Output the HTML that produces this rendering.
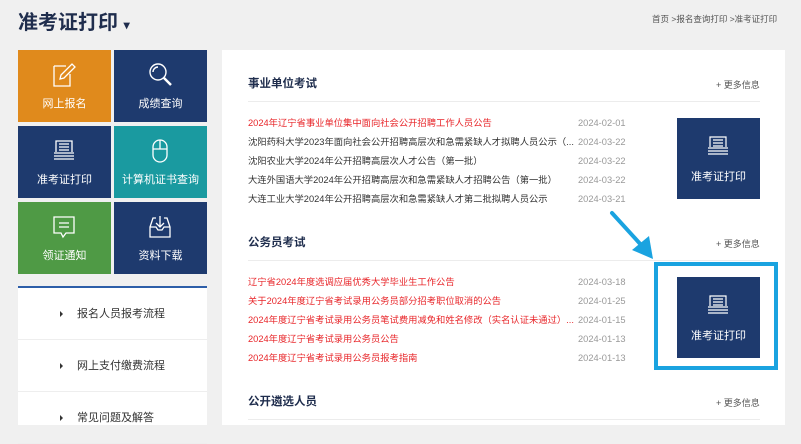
<!DOCTYPE html>
<html><head><meta charset="utf-8"><style>
*{margin:0;padding:0;box-sizing:border-box}
body{width:801px;height:425px;overflow:hidden;background:#f0f0f0;font-family:"Liberation Sans","Noto Sans CJK SC",sans-serif;position:relative}
.a{position:absolute}
.t{position:absolute;width:93px;height:72px;color:#fff;font-size:11px;text-align:center}
.t span{position:absolute;left:0;right:0;top:47px;line-height:14px}
.t svg{position:absolute;left:33px;top:11px}
.h{position:absolute;left:248px;font-size:11.5px;font-weight:bold;color:#1f2d4d;line-height:14px}
.m{position:absolute;left:716px;font-size:9px;color:#555;line-height:14px}
.ln{position:absolute;left:248px;width:512px;height:1px;background:#ececec}
.r{position:absolute;left:248px;font-size:9.3px;color:#333;white-space:nowrap;line-height:14px}
.r.red{color:#e8262a}
.d{position:absolute;left:578px;font-size:9.3px;color:#999;line-height:14px}
.bx{position:absolute;width:83px;height:81px;background:#1e3a6e;color:#fff;font-size:11px;text-align:center}
.bx span{position:absolute;left:0;right:0;top:52px;line-height:14px}
.bx svg{position:absolute;left:29px;top:17px}
.mi{position:absolute;left:18px;width:189px;height:52px;border-bottom:1px solid #eee;font-size:11px;color:#333}
.mi b{position:absolute;left:42px;top:23px;width:0;height:0;border-left:3px solid #333;border-top:3px solid transparent;border-bottom:3px solid transparent}
.mi span{position:absolute;left:59px;top:19px;line-height:14px}
</style></head><body>
<div class="a" style="left:18px;top:10px;font-size:20px;font-weight:bold;color:#1f2d4d;line-height:26px">准考证打印 <span style="font-size:12px">▾</span></div>
<div class="a" style="left:652px;top:13px;font-size:8.5px;color:#555;line-height:12px">首页 &gt;报名查询打印 &gt;准考证打印</div>

<div class="t" style="left:18px;top:50px;background:#e08a1c"><svg width="26" height="28" viewBox="0 0 26 28" fill="none" stroke="#fff" stroke-width="1.3"><path d="M3 5h12M3 5v20h16V13"/><path d="M9 18l1-4 11-11 3 3-11 11z"/></svg><span>网上报名</span></div>
<div class="t" style="left:114px;top:50px;background:#1e3a6e"><svg width="28" height="28" viewBox="0 0 28 28" fill="none" stroke="#fff" stroke-width="1.4"><circle cx="11" cy="11" r="8"/><path d="M6 11a5 5 0 0 1 5-5"/><path d="M17 17l7 7" stroke-width="2.5"/></svg><span>成绩查询</span></div>
<div class="t" style="left:18px;top:126px;background:#1e3a6e"><svg width="26" height="28" viewBox="0 0 26 28" fill="none" stroke="#fff" stroke-width="1.3"><path d="M5 15V4h16v11M8 7h10M8 10h10M8 13h10M3 16h20M3 19h20M3 22h20"/></svg><span>准考证打印</span></div>
<div class="t" style="left:114px;top:126px;background:#1a9aa0"><svg width="26" height="28" viewBox="0 0 26 28" fill="none" stroke="#fff" stroke-width="1.3"><rect x="6" y="3" width="14" height="22" rx="7"/><path d="M13 3v9M6 12h14"/></svg><span>计算机证书查询</span></div>
<div class="t" style="left:18px;top:202px;background:#4f9a45"><svg width="26" height="28" viewBox="0 0 26 28" fill="none" stroke="#fff" stroke-width="1.3"><path d="M3 4h20v16H15l-3 4-2-4H3z"/><path d="M8 10h10M8 14h10"/></svg><span>领证通知</span></div>
<div class="t" style="left:114px;top:202px;background:#1e3a6e"><svg width="26" height="28" viewBox="0 0 26 28" fill="none" stroke="#fff" stroke-width="1.3"><path d="M9 5H6L3 14v10h20V14L20 5h-3M3 14h6l2 3h4l2-3h6M13 3v11M9 10l4 4 4-4"/></svg><span>资料下载</span></div>

<div class="a" style="left:18px;top:286px;width:189px;height:139px;background:#fff;border-top:2px solid #2d5ea8"></div>
<div class="mi" style="top:288px"><b></b><span>报名人员报考流程</span></div>
<div class="mi" style="top:340px"><b></b><span>网上支付缴费流程</span></div>
<div class="mi" style="top:392px"><b></b><span>常见问题及解答</span></div>

<div class="a" style="left:222px;top:50px;width:563px;height:375px;background:#fff"></div>
<div class="h" style="top:77px">事业单位考试</div><div class="m" style="top:78px">+ 更多信息</div><div class="ln" style="top:101px"></div>
<div class="r red" style="top:116px">2024年辽宁省事业单位集中面向社会公开招聘工作人员公告</div><div class="d" style="top:116px">2024-02-01</div>
<div class="r" style="top:135px">沈阳药科大学2023年面向社会公开招聘高层次和急需紧缺人才拟聘人员公示（...</div><div class="d" style="top:135px">2024-03-22</div>
<div class="r" style="top:154px">沈阳农业大学2024年公开招聘高层次人才公告（第一批）</div><div class="d" style="top:154px">2024-03-22</div>
<div class="r" style="top:173px">大连外国语大学2024年公开招聘高层次和急需紧缺人才招聘公告（第一批）</div><div class="d" style="top:173px">2024-03-22</div>
<div class="r" style="top:192px">大连工业大学2024年公开招聘高层次和急需紧缺人才第二批拟聘人员公示</div><div class="d" style="top:192px">2024-03-21</div>

<div class="h" style="top:236px">公务员考试</div><div class="m" style="top:237px">+ 更多信息</div><div class="ln" style="top:260px"></div>
<div class="r red" style="top:275px">辽宁省2024年度选调应届优秀大学毕业生工作公告</div><div class="d" style="top:275px">2024-03-18</div>
<div class="r red" style="top:294px">关于2024年度辽宁省考试录用公务员部分招考职位取消的公告</div><div class="d" style="top:294px">2024-01-25</div>
<div class="r red" style="top:313px">2024年度辽宁省考试录用公务员笔试费用减免和姓名修改（实名认证未通过）...</div><div class="d" style="top:313px">2024-01-15</div>
<div class="r red" style="top:332px">2024年度辽宁省考试录用公务员公告</div><div class="d" style="top:332px">2024-01-13</div>
<div class="r red" style="top:351px">2024年度辽宁省考试录用公务员报考指南</div><div class="d" style="top:351px">2024-01-13</div>

<div class="h" style="top:395px">公开遴选人员</div><div class="m" style="top:396px">+ 更多信息</div><div class="ln" style="top:419px"></div>

<div class="bx" style="left:677px;top:118px"><svg width="24" height="24" viewBox="0 0 24 24" fill="none" stroke="#fff" stroke-width="1.2"><path d="M4 12V2h16v10M7 5h10M7 8h10M7 11h10M2 13h20M2 16h20M2 19h20"/></svg><span>准考证打印</span></div>
<div class="a" style="left:654px;top:262px;width:124px;height:108px;border:4px solid #1aa3e0"></div>
<div class="bx" style="left:677px;top:277px"><svg width="24" height="24" viewBox="0 0 24 24" fill="none" stroke="#fff" stroke-width="1.2"><path d="M4 12V2h16v10M7 5h10M7 8h10M7 11h10M2 13h20M2 16h20M2 19h20"/></svg><span>准考证打印</span></div>
<svg class="a" style="left:605px;top:205px" width="55" height="60" viewBox="0 0 55 60"><path d="M7 8L38 42" stroke="#1aa3e0" stroke-width="4" stroke-linecap="round"/><path d="M27 45L48 54 44 31z" fill="#1aa3e0"/></svg>
</body></html>
